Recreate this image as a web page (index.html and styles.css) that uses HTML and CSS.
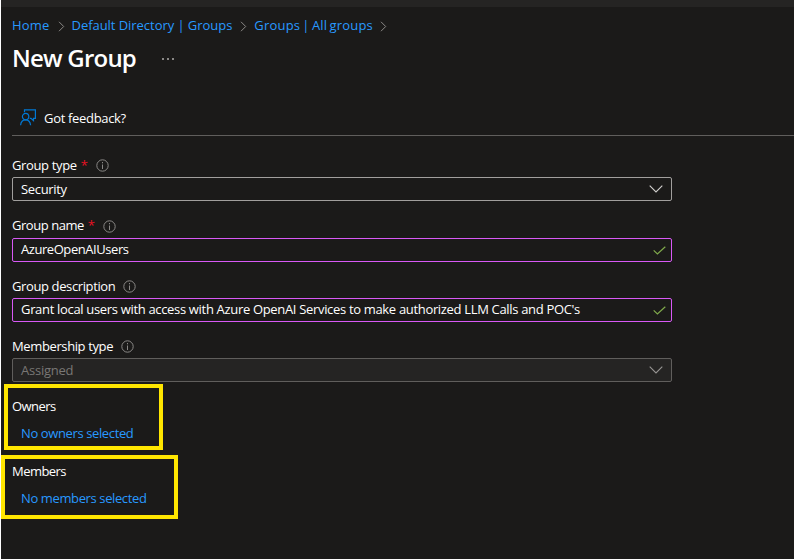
FILE: index.html
```html
<!DOCTYPE html>
<html lang="en">
<head>
<meta charset="utf-8">
<title>New Group</title>
<link rel="stylesheet" href="styles.css">
</head>
<body>
<svg class="defs" width="0" height="0" aria-hidden="true">
  <symbol id="info" viewBox="0 0 13 13"><circle cx="6.5" cy="6.5" r="5.7" fill="none" stroke="currentColor"/><path d="M6.5 5.5V10M6.5 3V4.3" stroke="currentColor" fill="none"/></symbol>
  <symbol id="sep" viewBox="0 0 7 11"><path d="M1 .8 5.7 5.5 1 10.2" stroke="currentColor" fill="none"/></symbol>
  <symbol id="down" viewBox="0 0 14 8"><path d="M.7.7 7 7 13.3.7" stroke="currentColor" stroke-width="1.1" fill="none"/></symbol>
  <symbol id="check" viewBox="0 0 13 9"><path d="M.7 4.4 4.4 8 12.3.7" stroke="currentColor" stroke-width="1.2" fill="none"/></symbol>
</svg>
<div class="topbar"></div>
<nav class="crumbs">
  <a class="t home">Home</a><svg class="sep"><use href="#sep"/></svg>
  <a class="t dir">Default Directory | Groups</a><svg class="sep"><use href="#sep"/></svg>
  <a class="t all">Groups | All groups</a><svg class="sep"><use href="#sep"/></svg>
</nav>
<header class="title"><h1 class="t">New Group</h1><span class="more"><i></i><i></i><i></i></span></header>
<div class="toolbar">
  <svg class="feedback" viewBox="0 0 16 17"><g fill="none" stroke="#0078d4" stroke-width="1.2"><path d="M4.5 3.2V.8H15.4V9.3H13.5V11.7L11 9.3H9.8"/><circle cx="5.6" cy="7.6" r="3.2"/><path d="M.6 16.2C.9 12.8 2.8 10.9 5.6 10.9S10.2 12.8 10.6 16.2"/></g></svg>
  <span class="t got">Got feedback?</span>
</div>
<main class="form">
  <div class="label"><span class="t">Group type</span><b>*</b><svg class="info"><use href="#info"/></svg></div>
  <div class="box"><span class="t sec">Security</span><svg class="down"><use href="#down"/></svg></div>
  <div class="label second"><span class="t name">Group name</span><b>*</b><svg class="info"><use href="#info"/></svg></div>
  <div class="box edited"><span class="t azu">AzureOpenAIUsers</span><svg class="check"><use href="#check"/></svg></div>
  <div class="label"><span class="t desc">Group description</span><svg class="info"><use href="#info"/></svg></div>
  <div class="box edited"><span class="t grant">Grant local users with access with Azure OpenAI Services to make authorized LLM Calls and POC's</span><svg class="check"><use href="#check"/></svg></div>
  <div class="label"><span class="t desc">Membership type</span><svg class="info"><use href="#info"/></svg></div>
  <div class="box disabled"><span class="t asg">Assigned</span><svg class="down"><use href="#down"/></svg></div>
</main>
<section class="mark owners"><div class="t">Owners</div><a class="t">No owners selected</a></section>
<section class="mark members"><div class="t">Members</div><a class="t">No members selected</a></section>
</body>
</html>
```
FILE: styles.css
```css
* { box-sizing: border-box; }
body {
  margin: 0;
  height: 559px;
  overflow: hidden;
  border-left: 1px solid #fff;
  background: #1b1a19;
  color: #fff;
  font: 13px/18px "Open Sans", "Noto Sans", sans-serif;
}
svg { display: block; flex: none; }
.defs { position: absolute; }
.t { white-space: nowrap; }
a { color: #2899ff; }
.topbar { height: 7px; background: #252423; }
.crumbs { display: flex; align-items: center; height: 36px; padding-left: 11px; }
.home { letter-spacing: .2px; }
.dir { letter-spacing: -.05px; }
.all { letter-spacing: .2px; word-spacing: -1.4px; }
.sep { width: 7px; height: 11px; margin: 2px 7px 0 8px; color: #8a8886; }
.all + .sep { margin-left: 7px; }
.title { display: flex; align-items: center; height: 32px; padding-left: 11px; }
h1 { margin: -2px 0 0; font-size: 24px; line-height: 32px; font-weight: 600; letter-spacing: -.78px; }
.more { display: flex; gap: 3px; margin-left: 26px; }
.more i { width: 2px; height: 2px; background: #8a8886; }
.toolbar { display: flex; align-items: center; height: 36px; margin: 25px 0 0 11px; padding-left: 8px; border-bottom: 1px solid #605e5c; }
.feedback { width: 16px; height: 17px; margin-right: 8px; }
.got { letter-spacing: -.32px; }
.form { width: 660px; margin: 17px 0 0 11px; }
.label { display: flex; align-items: center; height: 24px; margin-top: 12px; letter-spacing: -.36px; }
.label:first-child { margin-top: 0; }
.label.second { margin-top: 13px; }
.label.second .t, .label.second b { margin-top: -2px; }
.label.second .t { letter-spacing: -.46px; }
.label .desc { letter-spacing: -.38px; }
.label b { width: 7px; margin-left: 4px; color: #e81123; font-weight: 400; }
.info { width: 13px; height: 13px; margin-left: 8px; color: #8a8886; }
.box { display: flex; align-items: center; justify-content: space-between; height: 24px; padding: 0 8px; border: 1px solid #a19f9d; border-radius: 2px; }
.edited { padding-right: 5px; border-color: #d859f5; }
.edited .t { margin-top: -2px; }
.disabled { border-color: #605e5c; background: #252423; color: #797775; }
.sec { letter-spacing: -.32px; }
.asg { letter-spacing: -.24px; }
.azu { letter-spacing: -.44px; }
.grant { letter-spacing: -.325px; }
.down { width: 14px; height: 8px; color: #d2d0ce; }
.disabled .down { color: #979593; }
.check { width: 13px; height: 9px; color: #7fa84b; }
.mark { border: 4px solid #ffe600; letter-spacing: -.55px; }
.owners { width: 159px; height: 66px; margin: 2px 0 0 3px; padding: 9px 0 0 4px; }
.members { width: 177px; height: 64px; margin-top: 5px; padding: 3px 0 0 7px; }
.mark a { display: block; margin: 9px 0 0 9px; letter-spacing: -.38px; }
```
